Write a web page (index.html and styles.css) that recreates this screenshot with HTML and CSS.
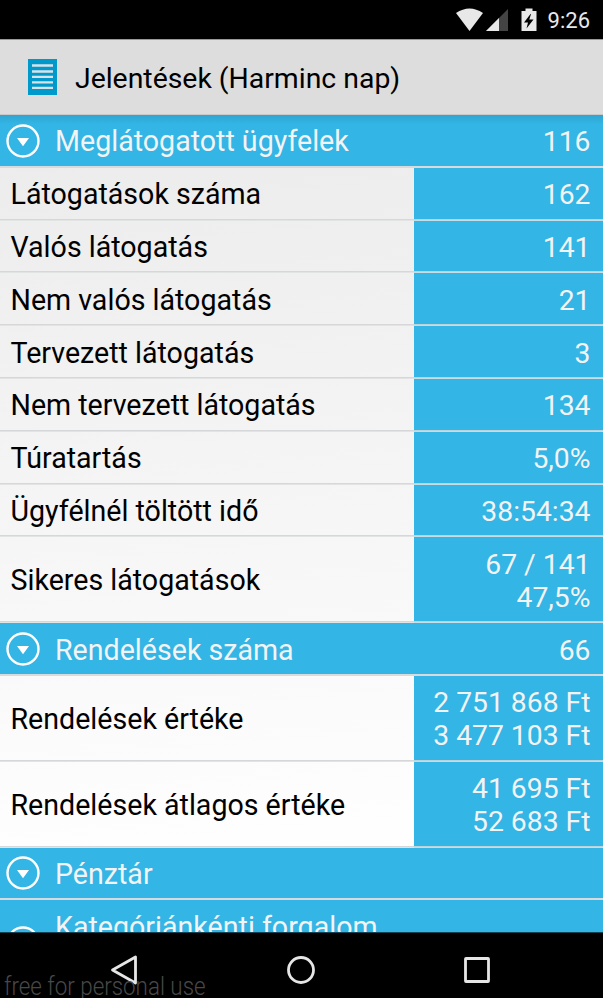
FILE: index.html
```html
<!DOCTYPE html>
<html lang="hu">
<head>
    <meta charset="UTF-8">
    <meta name="viewport" content="width=device-width, initial-scale=1.0">
    <title>Jelentések</title>
    <link rel="stylesheet" href="styles.css">
</head>
<body>
    <!-- Shared icons -->
    <svg class="icon-defs" width="0" height="0">
        <symbol id="expand" viewBox="0 0 34 34">
            <circle cx="17" cy="17" r="15.5" fill="none" stroke="#fff" stroke-width="2.4"/>
            <path d="M11 14h12l-6 8.2z" fill="#fff"/>
        </symbol>
    </svg>

    <!-- Status Bar -->
    <div class="status-bar">
        <svg class="status-icons" width="84" height="24" viewBox="0 0 84 24">
            <path d="M2 5Q15.500 -4 29 5L15.500 23z" fill="#e8e8e8"/>
            <path d="M32 23L54 1v22z" fill="#444"/>
            <path d="M32 23L45 10v13z" fill="#e8e8e8"/>
            <path d="M67.500 3h4V0.500h7V3h4v20h-15z" fill="#e8e8e8"/>
            <path d="M76.500 6l-6.500 8.500h4l-1.500 6 7-9h-4.200l1.700-5.500z" fill="#000"/>
        </svg>
        <span class="clock">9:26</span>
    </div>

    <!-- Header Section -->
    <header>
        <svg class="report-icon" width="29" height="36" viewBox="0 0 29 36">
            <path d="M0 0h29v36H0z" fill="#0099cc"/>
            <path d="M4 6.500h21M4 12.500h21M4 17.800h21M4 23.300h21M4 28.800h21" stroke="#d9e3e7" stroke-width="2.300"/>
        </svg>
        <h1>Jelentések (Harminc nap)</h1>
    </header>

    <!-- Report List -->
    <main class="report-list">
        <div class="row section">
            <svg class="expand-icon"><use href="#expand"/></svg>
            <span class="section-title">Meglátogatott ügyfelek</span>
            <span class="section-value">116</span>
        </div>
        <div class="row">
            <div class="label">Látogatások száma</div>
            <div class="value">162</div>
        </div>
        <div class="row">
            <div class="label">Valós látogatás</div>
            <div class="value">141</div>
        </div>
        <div class="row">
            <div class="label">Nem valós látogatás</div>
            <div class="value">21</div>
        </div>
        <div class="row">
            <div class="label">Tervezett látogatás</div>
            <div class="value">3</div>
        </div>
        <div class="row">
            <div class="label">Nem tervezett látogatás</div>
            <div class="value">134</div>
        </div>
        <div class="row">
            <div class="label">Túratartás</div>
            <div class="value">5,0%</div>
        </div>
        <div class="row">
            <div class="label">Ügyfélnél töltött idő</div>
            <div class="value">38:54:34</div>
        </div>
        <div class="row tall">
            <div class="label">Sikeres látogatások</div>
            <div class="value">67 / 141<br>47,5%</div>
        </div>
        <div class="row section">
            <svg class="expand-icon"><use href="#expand"/></svg>
            <span class="section-title">Rendelések száma</span>
            <span class="section-value">66</span>
        </div>
        <div class="row tall">
            <div class="label">Rendelések értéke</div>
            <div class="value">2 751 868 Ft<br>3 477 103 Ft</div>
        </div>
        <div class="row tall">
            <div class="label">Rendelések átlagos értéke</div>
            <div class="value">41 695 Ft<br>52 683 Ft</div>
        </div>
        <div class="row section">
            <svg class="expand-icon"><use href="#expand"/></svg>
            <span class="section-title">Pénztár</span>
        </div>
        <div class="row section tall">
            <svg class="expand-icon"><use href="#expand"/></svg>
            <span class="section-title">Kategóriánkénti forgalom</span>
        </div>
    </main>

    <!-- Navigation Bar -->
    <nav class="nav-bar">
        <svg width="30" height="32" viewBox="0 0 30 32">
            <path d="M26.500 3v26L3.500 16z" fill="none" stroke="#e6e6e6" stroke-width="2.800" stroke-linejoin="round"/>
        </svg>
        <svg width="30" height="32" viewBox="0 0 30 32">
            <circle cx="15" cy="16" r="12.500" fill="none" stroke="#e6e6e6" stroke-width="2.800"/>
        </svg>
        <svg width="30" height="32" viewBox="0 0 30 32">
            <rect x="3.500" y="4.500" width="23" height="23" rx="0.500" fill="none" stroke="#e6e6e6" stroke-width="2.800"/>
        </svg>
        <span class="watermark">free for personal use</span>
    </nav>
</body>
</html>
```

FILE: styles.css
```css
:root {
    --blue: #33b5e5;
    --light-text: #f3f3f3;
    --divider: #d8dadb;
}

* {
    margin: 0;
    padding: 0;
    box-sizing: border-box;
}

body {
    height: 998px;
    display: flex;
    flex-direction: column;
    overflow: hidden;
    background-color: #000;
    font-family: Roboto, sans-serif;
    font-size: 28.6px;
    line-height: 33px;
}

.icon-defs {
    position: absolute;
}

/* Status Bar */
.status-bar {
    height: 39px;
    flex: none;
    display: flex;
    justify-content: flex-end;
    align-items: center;
    gap: 10px;
    padding: 2px 13px 0 0;
    color: #e8e8e8;
    font-size: 22px;
}

.status-icons {
    margin-bottom: 2px;
}

/* Header Styles */
header {
    height: 76px;
    flex: none;
    display: flex;
    align-items: center;
    gap: 18px;
    padding-left: 28px;
    background-color: #ddd;
    border-top: 1px solid #999;
    border-bottom: 1px solid #c8c8c8;
}

h1 {
    padding-top: 3px;
    color: #000;
    font-size: 28.4px;
    font-weight: 400;
}

/* Report List */
.report-list {
    flex: 1;
    min-height: 0;
    overflow: hidden;
    background: linear-gradient(175deg, #ebebeb, #fff 90%);
    border-bottom: 1px solid #134456;
}

.row {
    height: 52.8px;
    display: flex;
    padding-bottom: 2px;
    background: linear-gradient(#d5d7d8 1px, #e2e3e3 1px) bottom / 100% 2px no-repeat;
}

.row.tall {
    height: 85.8px;
}

.label {
    flex: 1;
    display: flex;
    align-items: center;
    padding: 3px 0 0 10.5px;
    color: #000;
}

.value {
    width: 189px;
    display: flex;
    align-items: center;
    justify-content: flex-end;
    padding: 3px 12.5px 0 0;
    background-color: var(--blue);
    color: var(--light-text);
    font-size: 28.3px;
    text-align: right;
    box-shadow: 0 2px rgba(51, 181, 229, 0.15);
}

.section {
    align-items: center;
    padding: 0 12.5px 0 6px;
    background: var(--blue);
    border-bottom: 2px solid var(--divider);
    color: var(--light-text);
}

.section:first-child {
    background: linear-gradient(#2ea5d1, var(--blue) 9px);
}

.expand-icon {
    width: 34px;
    height: 34px;
    flex: none;
    margin-right: 15px;
}

.section:first-child .expand-icon {
    margin-top: 1px;
}

.section-title,
.section-value {
    padding-top: 3px;
}

.section-value {
    margin-left: auto;
    font-size: 28.3px;
}

.section.tall {
    align-items: flex-start;
    padding-top: 8px;
}

.section.tall .expand-icon {
    margin-top: 18px;
}

/* Navigation Bar */
.nav-bar {
    position: relative;
    height: 65px;
    flex: none;
    display: flex;
    align-items: center;
    justify-content: center;
    gap: 146.5px;
    padding: 9px 2px 0 0;
}

.watermark {
    position: absolute;
    left: 4px;
    bottom: -5px;
    color: #484848;
    font-size: 26px;
    font-weight: 300;
    white-space: nowrap;
    transform: scaleX(0.86);
    transform-origin: left;
}
```
